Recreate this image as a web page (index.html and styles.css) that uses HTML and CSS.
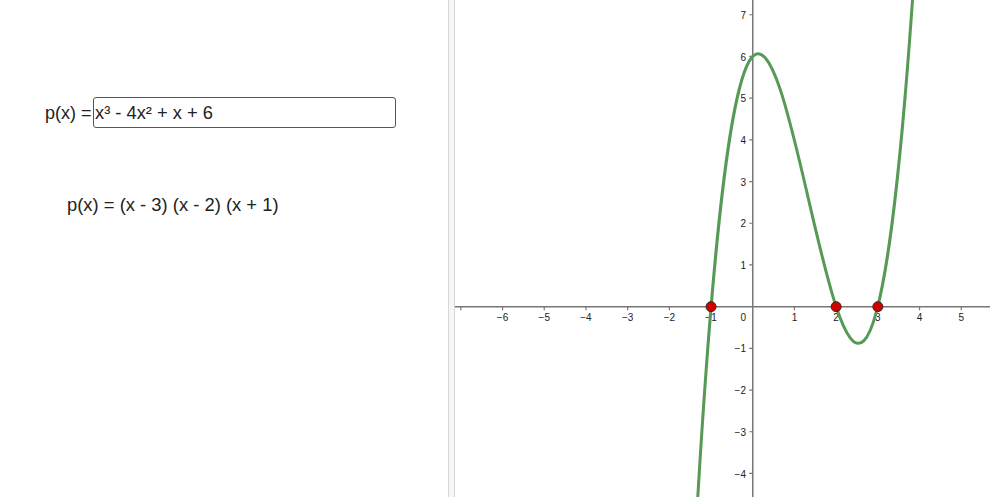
FILE: index.html
```html
<!DOCTYPE html>
<html>
<head>
<meta charset="utf-8">
<link rel="stylesheet" href="styles.css">
</head>
<body>
<div class="app">
  <div class="algebra">
    <div class="input-row">
      <span class="label">p(x) =</span>
      <div class="input">x³ - 4x² + x + 6</div>
    </div>
    <div class="factored">p(x) = (x - 3) (x - 2) (x + 1)</div>
  </div>
  <div class="divider"></div>
  <div class="graphics">
    <svg class="plot" width="535" height="497" viewBox="0 0 535 497">
      <g class="axes">
        <line x1="0" y1="306.67" x2="535" y2="306.67"/>
        <line x1="297.75" y1="0" x2="297.75" y2="497"/>
      </g>
      <g class="ticks">
        <path d="M5.85 306.67v3.5M47.55 306.67v3.5M89.25 306.67v3.5M130.95 306.67v3.5M172.65 306.67v3.5M214.35 306.67v3.5M256.05 306.67v3.5M339.45 306.67v3.5M381.15 306.67v3.5M422.85 306.67v3.5M464.55 306.67v3.5M506.25 306.67v3.5"/>
        <path d="M297.75 14.77h-3.5M297.75 56.47h-3.5M297.75 98.17h-3.5M297.75 139.87h-3.5M297.75 181.57h-3.5M297.75 223.27h-3.5M297.75 264.97h-3.5M297.75 348.37h-3.5M297.75 390.07h-3.5M297.75 431.77h-3.5M297.75 473.47h-3.5"/>
      </g>
      <g class="xlabels">
        <text x="47.55" y="320.8">−6</text>
        <text x="89.25" y="320.8">−5</text>
        <text x="130.95" y="320.8">−4</text>
        <text x="172.65" y="320.8">−3</text>
        <text x="214.35" y="320.8">−2</text>
        <text x="256.05" y="320.8">−1</text>
        <text x="339.45" y="320.8">1</text>
        <text x="381.15" y="320.8">2</text>
        <text x="422.85" y="320.8">3</text>
        <text x="464.55" y="320.8">4</text>
        <text x="506.25" y="320.8">5</text>
      </g>
      <g class="ylabels">
        <text x="291" y="320.8">0</text>
        <text x="291" y="18.8">7</text>
        <text x="291" y="60.5">6</text>
        <text x="291" y="102.2">5</text>
        <text x="291" y="143.9">4</text>
        <text x="291" y="185.6">3</text>
        <text x="291" y="227.3">2</text>
        <text x="291" y="269">1</text>
        <text x="291" y="352.4">−1</text>
        <text x="291" y="394.1">−2</text>
        <text x="291" y="435.8">−3</text>
        <text x="291" y="477.5">−4</text>
      </g>
      <path class="curve" d="M239.37 556.2 C314.43 -800.88 389.49 1165.69 464.55 -110.33"/>
      <g class="roots">
        <circle cx="256.05" cy="306.67" r="5"/>
        <circle cx="381.15" cy="306.67" r="5"/>
        <circle cx="422.85" cy="306.67" r="5"/>
      </g>
    </svg>
  </div>
</div>
</body>
</html>
```

FILE: styles.css
```css
html, body {
  margin: 0;
  padding: 0;
  background: #ffffff;
}

body {
  font-family: "Liberation Sans", Arial, sans-serif;
  color: #222222;
  overflow: hidden;
}

.app {
  display: flex;
  width: 990px;
  height: 497px;
}

.algebra {
  width: 448px;
  flex: none;
  box-sizing: border-box;
  padding: 97px 0 0 45px;
}

.input-row {
  display: flex;
  align-items: center;
}

.label {
  font-size: 18px;
  line-height: 20px;
  margin-right: 1.5px;
  white-space: nowrap;
}

.input {
  width: 303px;
  height: 31px;
  box-sizing: border-box;
  border: 1px solid #555555;
  border-radius: 3px;
  padding-left: 1px;
  font-size: 18.3px;
  line-height: 30px;
  white-space: nowrap;
}

.factored {
  margin-top: 67px;
  padding-left: 22px;
  font-size: 18.4px;
  line-height: 20px;
  white-space: nowrap;
}

.divider {
  width: 7px;
  flex: none;
  box-sizing: border-box;
  border-left: 1px solid #d6d6d6;
  border-right: 1px solid #d6d6d6;
  background: #f7f7f7;
}

.graphics {
  flex: 1;
  overflow: hidden;
}

.plot {
  display: block;
}

.axes line {
  stroke: #777777;
  stroke-width: 1.5;
}

.ticks path {
  stroke: #777777;
  stroke-width: 1.2;
  fill: none;
}

.xlabels text,
.ylabels text {
  font-family: "Liberation Sans", Arial, sans-serif;
  font-size: 10px;
  fill: #222222;
}

.xlabels text {
  text-anchor: middle;
}

.ylabels text {
  text-anchor: end;
}

.curve {
  fill: none;
  stroke: #569a56;
  stroke-width: 3;
}

.roots circle {
  fill: #d40000;
  stroke: #2a2a2a;
  stroke-width: 1;
}
```
